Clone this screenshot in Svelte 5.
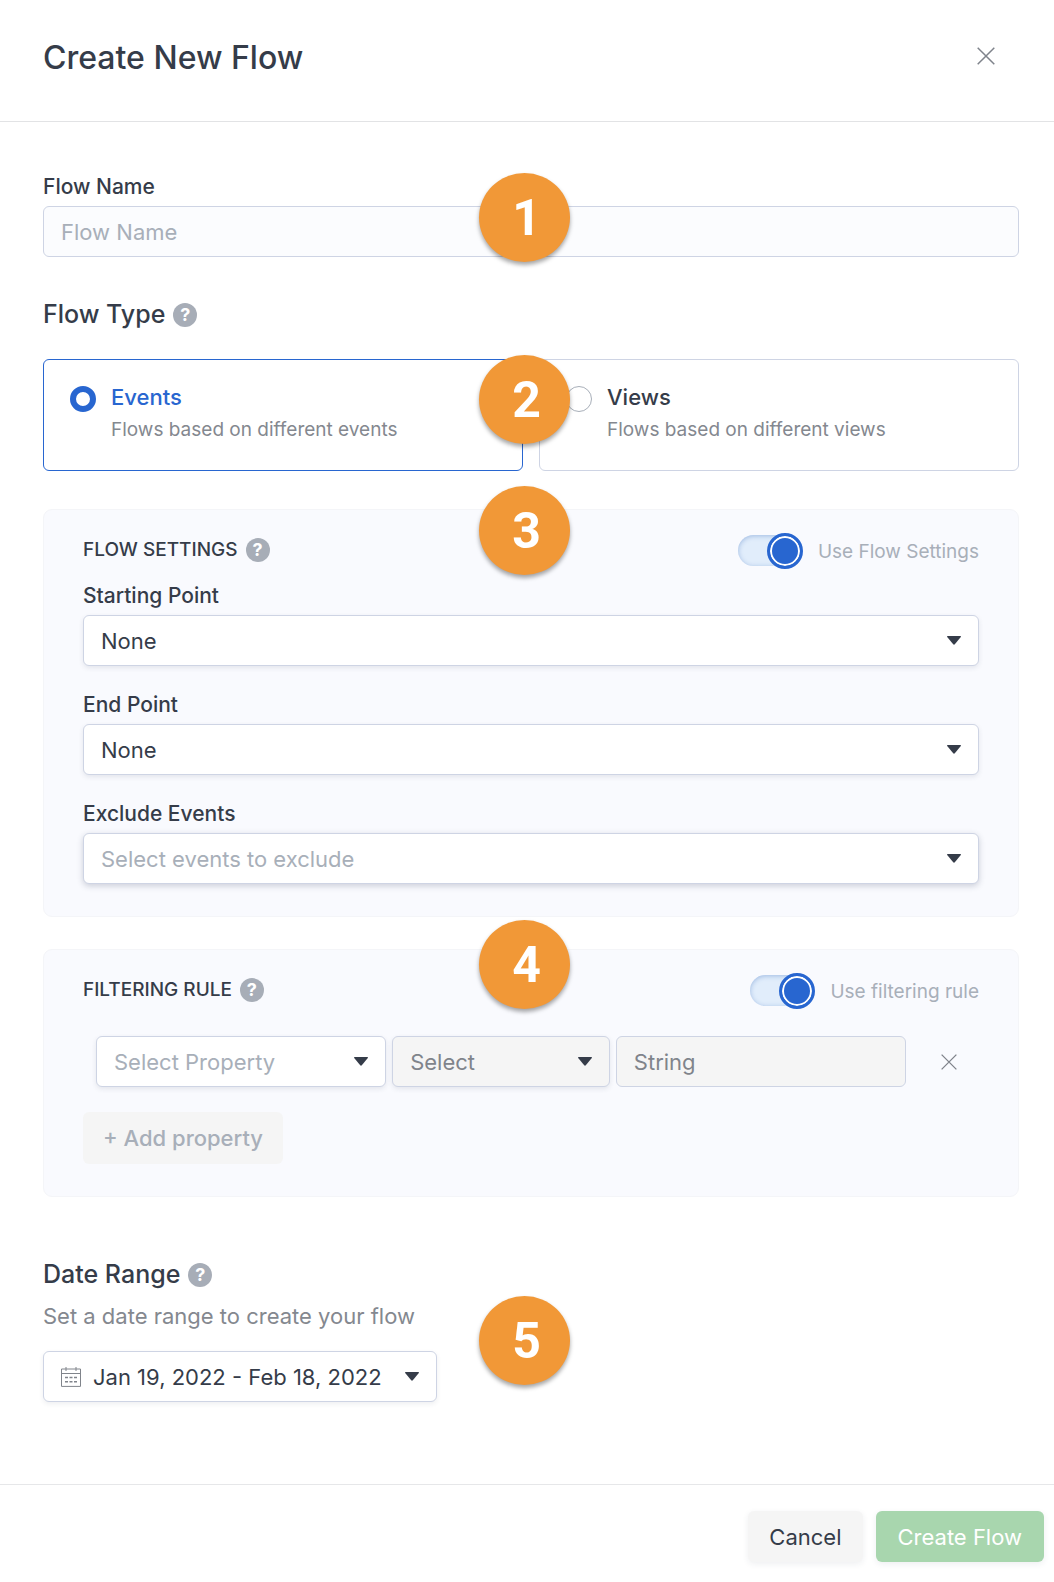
<script lang="ts">
  let flowName = "";
  let flowType = "events";
  let useSettings = true;
  let useFilter = true;

  const types = [
    { id: "events", label: "Events", text: "Flows based on different events" },
    { id: "views", label: "Views", text: "Flows based on different views" },
  ];

  const settings = [
    { id: "start", label: "Starting Point", value: "None" },
    { id: "end", label: "End Point", value: "None" },
    { id: "exclude", label: "Exclude Events", value: "Select events to exclude", empty: true },
  ];
</script>

{#snippet caret()}
  <svg class="caret" width="14" height="9" viewBox="0 0 14 9" aria-hidden="true">
    <path d="M0.6 0h12.8c.6 0 .7.5.4.9L7.8 8.3c-.5.6-1.1.6-1.6 0L.2.9C-.1.5 0 0 .6 0z" />
  </svg>
{/snippet}

{#snippet cross(size)}
  <svg width={size} height={size} viewBox="0 0 18 18" aria-hidden="true">
    <path d="M.7.7l16.6 16.6M17.3.7L.7 17.3" fill="none" stroke="currentColor" stroke-width="1.5" />
  </svg>
{/snippet}

{#snippet help(topic)}
  <button class="help" type="button" aria-label={"Help: " + topic}>?</button>
{/snippet}

<form class="modal" on:submit|preventDefault>
  <header>
    <h1>Create New Flow</h1>
    <button class="close" type="button" aria-label="Close">{@render cross(18)}</button>
  </header>

  <main>
    <div class="field">
      <label for="flow-name">Flow Name</label>
      <div class="anchor">
        <input id="flow-name" class="control" type="text" placeholder="Flow Name" bind:value={flowName} />
        <span class="badge badge-name">1</span>
      </div>
    </div>

    <div class="heading type-heading">
      <h2>Flow Type</h2>
      {@render help("Flow Type")}
    </div>
    <div class="types anchor">
      {#each types as type}
        <label class="card" class:active={flowType == type.id}>
          <input type="radio" name="flow-type" value={type.id} bind:group={flowType} />
          <span>
            <span class="card-title">{type.label}</span>
            <span class="card-text">{type.text}</span>
          </span>
        </label>
      {/each}
      <span class="badge badge-type">2</span>
    </div>

    <section class="panel anchor">
      <div class="panel-head">
        <div class="heading">
          <h3>FLOW SETTINGS</h3>
          {@render help("Flow Settings")}
        </div>
        <label class="toggle">
          <input type="checkbox" bind:checked={useSettings} />
          <span>Use Flow Settings</span>
        </label>
      </div>
      <div class="settings">
        {#each settings as item}
          <div class="field">
            <label for={item.id}>{item.label}</label>
            <div class="select">
              <select id={item.id} class="control" class:empty={item.empty} class:raised={item.empty}>
                <option>{item.value}</option>
              </select>
              {@render caret()}
            </div>
          </div>
        {/each}
      </div>
      <span class="badge badge-settings">3</span>
    </section>

    <section class="panel filter anchor">
      <div class="panel-head">
        <div class="heading">
          <h3>FILTERING RULE</h3>
          {@render help("Filtering Rule")}
        </div>
        <label class="toggle">
          <input type="checkbox" bind:checked={useFilter} />
          <span>Use filtering rule</span>
        </label>
      </div>
      <div class="rule">
        <div class="select">
          <select class="control empty" aria-label="Property">
            <option>Select Property</option>
          </select>
          {@render caret()}
        </div>
        <div class="select">
          <select class="control" aria-label="Condition" disabled>
            <option>Select</option>
          </select>
          {@render caret()}
        </div>
        <input class="control" type="text" aria-label="Value" placeholder="String" disabled />
        <button class="close" type="button" aria-label="Remove property">{@render cross(16)}</button>
      </div>
      <button class="add" type="button" disabled>+ Add property</button>
      <span class="badge badge-filter">4</span>
    </section>

    <section class="dates">
      <div class="heading">
        <h2>Date Range</h2>
        {@render help("Date Range")}
      </div>
      <p>Set a date range to create your flow</p>
      <div class="anchor">
        <button class="control date" type="button">
          <svg class="calendar" width="20" height="20" viewBox="0 0 20 20" aria-hidden="true">
            <path d="M.5 2h19v17.4H.5zM.5 6.5h19M5 0v4M15 0v4" />
            <path d="M4 10.5h12M4 14.8h12" stroke-width="1.6" stroke-dasharray="3 1.5" />
          </svg>
          <span>Jan 19, 2022 - Feb 18, 2022</span>
          {@render caret()}
        </button>
        <span class="badge badge-dates">5</span>
      </div>
    </section>
  </main>

  <footer>
    <button class="btn" type="button">Cancel</button>
    <button class="btn primary" type="submit">Create Flow</button>
  </footer>
</form>

<style>
  .modal {
    font-family: Inter, "Liberation Sans", sans-serif;
    color: #353c49;
    background: #fff;
  }
  .modal * {
    box-sizing: border-box;
  }
  header {
    display: flex;
    justify-content: space-between;
    align-items: flex-start;
    padding: 38px 59px 43px 43px;
    border-bottom: 1px solid #e2e3e5;
  }
  h1,
  h2,
  h3,
  p {
    margin: 0;
    font-weight: 500;
  }
  h1 {
    font-size: 32px;
    line-height: 40px;
  }
  h2 {
    font-size: 25px;
    line-height: 32px;
  }
  h3 {
    font-size: 19px;
    line-height: 28px;
  }
  button,
  input,
  select {
    margin: 0;
    font-family: inherit;
    color: inherit;
  }
  button {
    cursor: pointer;
  }
  main {
    padding: 51px 35px 82px 43px;
  }
  svg {
    display: block;
  }
  .close {
    height: 36px;
    padding: 0;
    border: 0;
    background: none;
    color: #7f838b;
  }

  .anchor {
    position: relative;
  }
  .badge {
    position: absolute;
    left: calc(50% - 52px);
    width: 91px;
    height: 89px;
    padding-left: 4px;
    border-radius: 50%;
    background: #f19837;
    box-shadow: 0 3px 4px rgba(0, 0, 0, 0.35);
    color: #fff;
    font: bold 50px/91px Roboto, "Liberation Sans", sans-serif;
    text-align: center;
  }
  .badge-name {
    top: -33px;
  }
  .badge-type {
    top: -4px;
  }
  .badge-settings {
    top: -24px;
  }
  .badge-filter {
    top: -30px;
  }
  .badge-dates {
    top: -55px;
  }

  .field label {
    display: block;
    margin-bottom: 5px;
    font-size: 21px;
    font-weight: 500;
    line-height: 28px;
  }
  .control {
    display: block;
    width: 100%;
    height: 51px;
    padding: 0 17px;
    border: 1px solid #ced4e4;
    border-radius: 6px;
    background: #fff;
    font-size: 22px;
    line-height: 30px;
  }
  .control::placeholder {
    color: #a8afb9;
    opacity: 1;
  }
  #flow-name {
    background: #fbfcfe;
  }
  .control:disabled,
  .control:disabled::placeholder {
    color: #80848b;
    opacity: 1;
  }
  .control:disabled {
    background: #f5f5f5;
  }
  .select {
    display: grid;
    align-items: center;
  }
  .select > :global(*) {
    grid-area: 1 / 1;
  }
  select.control {
    appearance: none;
    box-shadow: 0 2px 5px rgba(40, 50, 80, 0.1);
  }
  select.raised {
    box-shadow: 0 2px 6px rgba(40, 50, 80, 0.22);
  }
  select.empty {
    color: #a8afb9;
  }
  .caret {
    fill: #353c49;
  }
  .select .caret {
    justify-self: end;
    margin-right: 18px;
    pointer-events: none;
  }

  .heading {
    display: flex;
    align-items: center;
    gap: 8px;
  }
  .type-heading {
    margin: 41px 0 29px;
  }
  .help {
    width: 24px;
    height: 24px;
    padding: 0;
    border: 0;
    border-radius: 50%;
    background: #a7adb7;
    color: #fff;
    font-size: 18px;
    font-weight: 700;
    line-height: 24px;
    text-align: center;
  }
  h2 + :global(.help) {
    margin-top: 2px;
  }

  .types {
    display: grid;
    grid-template-columns: 1fr 1fr;
    gap: 16px;
  }
  .card {
    display: flex;
    gap: 15px;
    padding: 22px 26px 26px;
    border: 1px solid #ced4e4;
    border-radius: 6px;
  }
  .card.active {
    border-color: #2866d0;
  }
  .card input {
    appearance: none;
    flex: none;
    width: 26px;
    height: 26px;
    margin-top: 4px;
    border: 1px solid #a8afb9;
    border-radius: 50%;
    background: #fff;
  }
  .card input:checked {
    border: 6px solid #2866d0;
  }
  .card-title,
  .card-text {
    display: block;
  }
  .card-title {
    margin-bottom: 4px;
    font-size: 22px;
    font-weight: 500;
    line-height: 30px;
  }
  .active .card-title {
    color: #2866d0;
  }
  .card-text {
    color: #84888f;
    font-size: 19px;
    line-height: 28px;
  }

  .panel {
    margin-top: 38px;
    padding: 22px 39px 32px;
    border: 1px solid #f4f5f8;
    border-radius: 9px;
    background: #f9fafe;
  }
  .panel.filter {
    margin-top: 32px;
  }
  .panel-head {
    display: flex;
    justify-content: space-between;
    align-items: center;
    height: 36px;
  }
  .settings {
    display: grid;
    gap: 25px;
    margin-top: 14px;
  }
  .toggle {
    display: flex;
    align-items: center;
    gap: 16px;
    color: #a8afb9;
    font-size: 19px;
    line-height: 28px;
  }
  .toggle span {
    padding-top: 3px;
  }
  .toggle input {
    appearance: none;
    position: relative;
    width: 64px;
    height: 31px;
    border-radius: 16px;
    background: #e1edfb;
    box-shadow: inset 0 1px 5px rgba(60, 110, 190, 0.4);
  }
  .toggle input::after {
    content: "";
    position: absolute;
    top: -2px;
    left: 0;
    width: 36px;
    height: 36px;
    border: 3px solid #2866d0;
    border-radius: 50%;
    background: #2866d0;
    box-shadow: inset 0 0 0 2px #fff;
    box-sizing: border-box;
  }
  .toggle input:checked::after {
    left: 29px;
  }
  .rule {
    display: grid;
    grid-template-columns: 4fr 3fr 4fr 67px;
    align-items: center;
    gap: 6px;
    margin: 28px 0 25px;
    padding-left: 13px;
  }
  .rule .close {
    justify-self: end;
    margin-right: 22px;
  }
  .add {
    height: 52px;
    padding: 0 20px;
    border: 0;
    border-radius: 6px;
    background: #f5f5f5;
    color: #a8afb9;
    font-size: 22px;
    font-weight: 500;
  }

  .dates {
    margin-top: 61px;
  }
  .dates p {
    margin: 11px 0 20px;
    color: #84888f;
    font-size: 22px;
    font-weight: 400;
    line-height: 30px;
  }
  .date {
    display: flex;
    align-items: center;
    gap: 12px;
    width: fit-content;
    box-shadow: 0 2px 5px rgba(40, 50, 80, 0.08);
  }
  .date .caret {
    margin-left: 11px;
  }
  .calendar {
    fill: none;
    stroke: #80848b;
  }

  footer {
    display: flex;
    justify-content: flex-end;
    gap: 13px;
    padding: 26px 10px 20px;
    border-top: 1px solid #e6e7e9;
  }
  .btn {
    height: 51px;
    padding: 0 21px;
    border: 0;
    border-radius: 6px;
    background: #f5f5f5;
    box-shadow: 0 2px 6px rgba(40, 50, 80, 0.08);
    font-size: 22px;
  }
  .btn.primary {
    padding: 0 22px;
    background: #a8d6ae;
    color: #fff;
  }
</style>
